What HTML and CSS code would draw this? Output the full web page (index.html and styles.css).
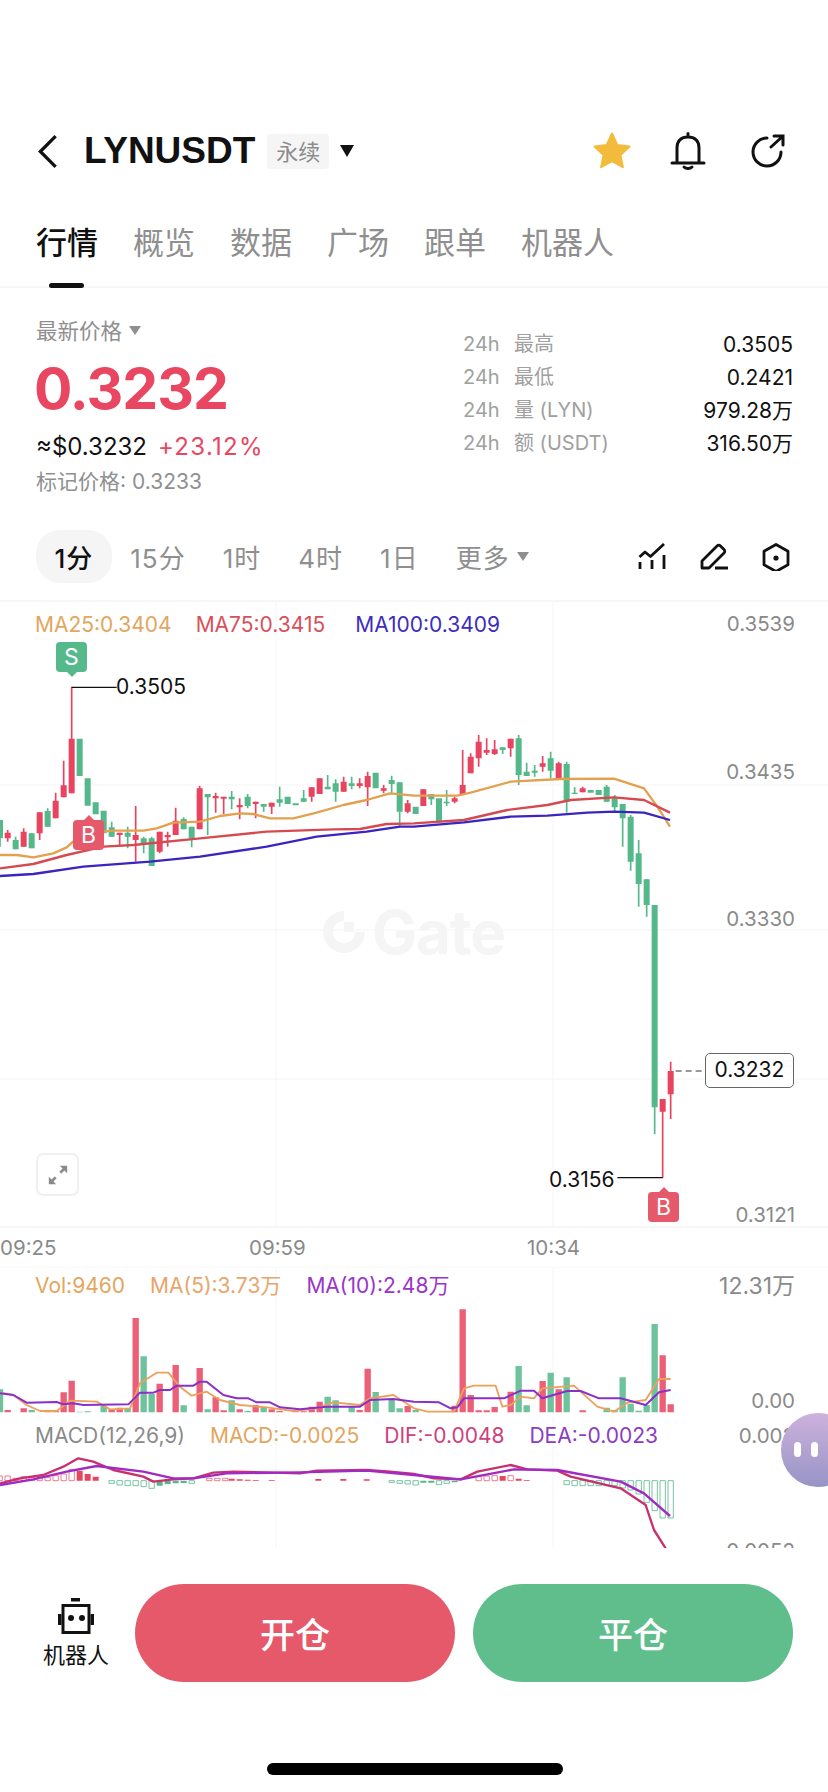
FILE: index.html
```html
<!DOCTYPE html>
<html lang="zh-CN">
<head>
<meta charset="utf-8">
<title>LYNUSDT</title>
<link rel="stylesheet" href="styles.css">
</head>
<body>
<div class="app">
  <header class="topbar">
    <svg class="back" viewBox="0 0 20 32"><path d="M17 2 3 16l14 14"/></svg>
    <h1 class="symbol">LYNUSDT</h1>
    <span class="tag">永续</span>
    <span class="caret"></span>
    <div class="top-icons">
      <svg class="ico-star" viewBox="0 0 40 40"><path d="M20 2.500l5.300 11.400 12.200 1.500-9 8.500 2.400 12.300L20 30.100 9.100 36.200l2.400-12.300-9-8.500 12.200-1.500z"/></svg>
      <svg class="ico-line" viewBox="0 0 36 38"><path d="M2 31h32M7 31V16c0-7 4-11 11-11s11 4 11 11v15M18 1.500V5M14 35c2 2 6 2 8 0"/></svg>
      <svg class="ico-line" viewBox="0 0 36 38"><path d="M31 20a14 14 0 1 1-14-14M21 15 33 4M24 4h9v9"/></svg>
    </div>
  </header>

  <nav class="tabs">
    <a class="tab active">行情</a><a class="tab">概览</a><a class="tab">数据</a><a class="tab">广场</a><a class="tab">跟单</a><a class="tab">机器人</a>
  </nav>

  <section class="quote">
    <div class="quote-left">
      <div class="latest">最新价格<i class="mini-caret"></i></div>
      <div class="price">0.3232</div>
      <div class="fiat">≈$0.3232<span class="change">+23.12%</span></div>
      <div class="mark">标记价格: 0.3233</div>
    </div>
    <dl class="stats">
      <div class="stat"><dt><span class="h24">24h</span>最高</dt><dd>0.3505</dd></div>
      <div class="stat"><dt><span class="h24">24h</span>最低</dt><dd>0.2421</dd></div>
      <div class="stat"><dt><span class="h24">24h</span>量 (LYN)</dt><dd>979.28万</dd></div>
      <div class="stat"><dt><span class="h24">24h</span>额 (USDT)</dt><dd>316.50万</dd></div>
    </dl>
  </section>

  <div class="periods">
    <span class="period on">1分</span><span class="period">15分</span><span class="period">1时</span><span class="period">4时</span><span class="period">1日</span><span class="period">更多<i class="mini-caret"></i></span>
    <div class="tools">
      <svg class="tool" viewBox="0 0 28 28"><path d="M1.500 14l5.500-5 5.500 4.500L26 1M2 19v7M14 17v9M26 12v14"/></svg>
      <svg class="tool" viewBox="0 0 28 28"><path d="M2 25v-7L17 3c1-1 2.500-1 3.500 0l3.500 3.500c1 1 1 2.500 0 3.500L9 25zM15 25h13"/></svg>
      <svg class="tool" viewBox="0 0 28 28"><path d="M14 1.500 26 8.300v13.400l-12 6.800-12-6.800V8.300z"/><circle class="tool-dot" cx="14" cy="15" r="2.600"/></svg>
    </div>
  </div>

  <section class="main-chart">
    <svg class="plot" viewBox="0 270 2484 1884" preserveAspectRatio="none">
      <path class="grid" d="M0 825H2484M0 1260H2484M0 1707H2484M828 270V2154M1659 270V2154"/>
      <path class="wick up" d="M23 960V995M71 955V1010M119 907V990M167 848V925M191 752V862M215 530V850M359 968V1008M407 888V1055M479 965V1030M503 965V1010M527 893V975M599 827V958M647 848V908M671 860V912M719 865V928M767 875V925M815 878V912M935 832V875M959 805V852M1031 800V845M1079 805V835M1103 785V888M1151 825V850M1223 870V910M1270 838V888M1364 860V880M1388 720V855M1412 730V790M1436 675V770M1460 685V735M1484 690V735M1532 686V740M1628 738V785M1676 755V805M1748 830V847M1988 1767V2003M2012 1655V1827"/>
      <path class="body up" d="M23 968V985M71 965V1010M119 907V970M167 872V925M191 826V862M215 686V850M359 968V975M407 975V990M479 965V1025M503 975V982M527 932V975M599 835V958M647 858V865M671 860V866M719 885V892M767 875V882M815 878V890M935 832V860M959 805V852M1031 815V845M1079 820V828M1103 798V832M1151 835V842M1223 880V905M1270 838V888M1364 865V875M1388 825V855M1412 740V790M1436 695V745M1460 720V728M1484 718V732M1532 686V715M1628 760V770M1676 760V805M1748 835V847M1988 1767V1805M2012 1683V1753"/>
      <path class="wick down" d="M0 930V1010M47 980V1018M95 970V1015M143 895V950M335 935V980M383 950V1015M431 980V1030M455 980V1068M551 922V958M575 950V1012M623 852V975M695 843V898M743 852V895M791 882V905M839 830V890M911 840V875M983 795V838M1007 808V875M1055 800V838M1175 797V850M1199 817V950M1294 852V885M1340 840V888M1508 712V732M1556 675V825M1580 758V798M1604 765V800M1652 725V805M1700 755V908M1724 832V852M1820 825V875M1844 855V905M1868 882V1010M1892 915V1082M1916 990V1190M1940 1108V1220M1964 1185V1873"/>
      <path class="body down" d="M0 930V985M47 990V1018M95 970V1015M143 903V950M239 686V798M263 805V887M287 877V913M311 902V970M335 952V980M383 968V980M431 985V1000M455 985V1068M551 927V958M575 950V985M623 852V862M695 860V868M743 860V888M791 882V890M839 868V878M863 860V882M887 880V886M911 865V875M983 830V838M1007 820V845M1055 820V828M1127 788V835M1175 810V822M1199 817V905M1247 890V912M1294 852V868M1317 865V935M1340 875V880M1508 712V720M1556 685V795M1580 785V798M1604 782V788M1652 745V782M1700 762V875M1724 848V852M1772 840V848M1796 840V855M1820 830V875M1844 865V892M1868 882V925M1892 920V1055M1916 1030V1122M1940 1108V1185M1964 1185V1792"/>
      <polyline class="ma ma25" points="0,1035 50,1035 100,1042 160,1030 200,1012 225,990 310,965 340,962 430,962 470,955 520,938 600,935 660,918 720,910 760,912 810,925 880,925 950,908 1030,885 1100,870 1170,850 1242,857 1372,857 1412,848 1532,815 1682,807 1842,806 1932,835 1972,890 2010,950"/>
      <polyline class="ma ma75" points="0,1075 100,1062 200,1035 310,1010 400,1005 600,985 800,965 1000,958 1080,957 1160,942 1242,940 1392,930 1522,900 1642,885 1712,870 1842,862 1932,870 2010,908"/>
      <polyline class="ma ma100" points="0,1098 100,1092 250,1070 450,1055 600,1040 800,1010 950,980 1100,965 1200,950 1242,950 1392,937 1532,920 1642,917 1762,908 1842,905 1932,908 2010,930"/>
      <path class="leader" d="M215 532H350M1852 2003H1988"/>
      <path class="dash" d="M2027 1683H2115"/>
    </svg>

    <div class="legend">
      <span class="c-ma25">MA25:0.3404</span><span class="c-ma75">MA75:0.3415</span><span class="c-ma100">MA100:0.3409</span>
    </div>

    <div class="watermark">
      <svg class="wm-logo" viewBox="0 0 42 42"><path d="M21 0A21 21 0 1 0 42 21H32A11 11 0 1 1 21 10zM21 21h10V11H21z"/></svg>
      <span>Gate</span>
    </div>

    <span class="yl y1">0.3539</span>
    <span class="yl y2">0.3435</span>
    <span class="yl y3">0.3330</span>
    <span class="yl y4">0.3225</span>
    <span class="yl y5">0.3121</span>

    <span class="extreme hi">0.3505</span>
    <span class="extreme lo">0.3156</span>
    <span class="last-price">0.3232</span>

    <span class="badge sell s1">S</span>
    <span class="badge buy b1">B</span>
    <span class="badge buy b2">B</span>

    <button class="expand" aria-label="全屏">
      <svg viewBox="0 0 24 24"><path d="M14 2h8v8l-3-3-3.500 3.500-2-2L17 5zM10 22H2v-8l3 3 3.500-3.500 2 2L7 19z"/></svg>
    </button>
  </section>

  <div class="time-axis"><span>09:25</span><span>09:59</span><span>10:34</span></div>

  <section class="lower">
    <svg class="plot" viewBox="0 144 2484 840" preserveAspectRatio="none">
      <path class="grid" d="M828 144V984M1659 144V984"/>
      <path class="vol up" d="M23 577V570M71 577V565M143 577V573M167 577V573M191 577V517M215 577V482M335 577V570M359 577V563M407 577V294M479 577V491M527 577V435M599 577V444M647 577V532M671 577V571M719 577V568M767 577V555M815 577V568M839 577V573M887 577V574M911 577V574M935 577V560M959 577V545M1079 577V570M1103 577V446M1223 577V558M1364 577V557M1388 577V268M1412 577V525M1436 577V571M1460 577V571M1484 577V561M1532 577V515M1628 577V483M1676 577V508M1748 577V571M1988 577V406M2012 577V553"/>
      <path class="vol down" d="M0 577V508M95 577V570M239 577V575M263 577V574M311 577V558M383 577V566M431 577V409M455 577V522M551 577V556M623 577V568M695 577V541M743 577V573M791 577V560M983 577V530M1007 577V541M1055 577V560M1127 577V516M1175 577V537M1199 577V565M1247 577V570M1556 577V438M1580 577V556M1652 577V458M1700 577V472M1820 577V563M1844 577V570M1868 577V472M1892 577V551M1916 577V572M1940 577V555M1964 577V312"/>
      <polyline class="ma vol-ma5" points="0,518 40,525 80,555 120,573 170,573 210,542 290,545 330,568 390,565 420,490 470,458 505,458 540,500 575,527 620,515 660,540 720,555 800,562 880,573 950,565 1000,547 1080,555 1110,535 1180,525 1242,565 1282,575 1362,575 1392,505 1422,497 1487,497 1507,560 1532,555 1562,530 1602,535 1627,505 1722,497 1792,560 1842,575 1882,548 1937,540 1977,477 2012,477"/>
      <polyline class="ma vol-ma10" points="0,520 40,525 80,548 170,546 190,553 220,550 250,555 385,553 420,518 460,518 480,510 510,510 530,497 580,497 600,485 620,485 670,525 710,535 745,535 770,547 810,547 840,562 900,568 980,560 1080,560 1110,540 1180,537 1242,545 1317,547 1352,565 1372,562 1392,535 1512,535 1562,512 1602,512 1627,535 1702,513 1742,513 1797,535 1862,535 1937,555 1977,517 2012,510"/>
      <path class="hist-solid up" d="M239 782V752M263 782V762M287 782V770M695 782V776M719 782V778M743 782V779M767 782V780M815 782V780M955 782V777M1030 782V777M1100 782V778M1508 782V768M1556 782V776M1580 782V780"/>
      <path class="hist-solid down" d="M479 782V797M503 782V792M527 782V790M551 782V789M1270 782V788M1294 782V788M1364 782V787M1724 782V785M1772 782V785"/>
      <path class="hist-box up-line" d="M-9 782h16v-14h-16zM15 782h16v-14h-16zM39 782h16v-7h-16zM63 782h16v-12h-16zM87 782h16v-10h-16zM111 782h16v-10h-16zM135 782h16v-10h-16zM159 782h16v-15h-16zM183 782h16v-20h-16zM207 782h16v-34h-16zM620 782h16v-7h-16zM644 782h16v-7h-16zM668 782h16v-7h-16zM1428 782h16v-12h-16zM1452 782h16v-14h-16zM1476 782h16v-15h-16zM1524 782h16v-15h-16z"/>
      <path class="hist-box down-line" d="M327 782h16v8h-16zM351 782h16v13h-16zM375 782h16v15h-16zM399 782h16v15h-16zM423 782h16v18h-16zM447 782h16v23h-16zM567 782h16v8h-16zM1167 782h16v5h-16zM1191 782h16v8h-16zM1215 782h16v10h-16zM1239 782h16v13h-16zM1309 782h16v12h-16zM1332 782h16v8h-16zM1692 782h16v12h-16zM1716 782h16v15h-16zM1740 782h16v15h-16zM1764 782h16v15h-16zM1788 782h16v15h-16zM1812 782h16v15h-16zM1836 782h16v15h-16zM1860 782h16v22h-16zM1884 782h16v28h-16zM1908 782h16v40h-16zM1932 782h16v65h-16zM1956 782h16v90h-16zM1980 782h16v112h-16zM2004 782h16v112h-16z"/>
      <polyline class="ma dif" points="0,790 60,775 130,765 190,740 235,715 280,725 340,750 430,770 460,785 520,778 580,775 640,758 700,755 900,760 950,752 1100,750 1170,755 1242,762 1302,775 1382,778 1432,755 1532,735 1582,748 1672,752 1712,770 1862,805 1937,855 1962,930 1997,985"/>
      <polyline class="ma dea" points="0,795 100,778 200,755 290,738 430,755 520,775 580,775 680,760 900,757 1100,752 1242,765 1382,778 1542,748 1672,750 1862,785 1932,820 2010,888"/>
    </svg>

    <div class="row vol-row">
      <div class="legend-inline"><span class="c-ma25">Vol:9460</span><span class="c-ma5">MA(5):3.73万</span><span class="c-ma10">MA(10):2.48万</span></div>
      <span class="axis-val axis-top">12.31万</span>
    </div>
    <div class="row zero-row"><span></span><span class="axis-val">0.00</span></div>
    <div class="row macd-row">
      <div class="legend-inline"><span class="c-gray">MACD(12,26,9)</span><span class="c-ma25">MACD:-0.0025</span><span class="c-dif">DIF:-0.0048</span><span class="c-dea">DEA:-0.0023</span></div>
      <span class="axis-val">0.002</span>
    </div>
    <div class="row min-row"><span></span><span class="axis-val">0.0052</span></div>
  </section>

  <footer class="actions">
    <div class="bot">
      <svg class="bot-ico" viewBox="0 0 38 36"><path class="bot-line" d="M6 7.500h26v27H6z"/><path class="bot-fill" d="M14 0h9v3.500h-9zM1 16h3.500v11H1zM33.500 16H37v11h-3.500z"/><circle class="bot-fill" cx="14" cy="20" r="3"/><circle class="bot-fill" cx="25" cy="20" r="3"/></svg>
      <span class="bot-label">机器人</span>
    </div>
    <button class="cta open">开仓</button>
    <button class="cta close">平仓</button>
  </footer>

  <div class="home-bar"></div>

  <div class="assistant"><i></i><i></i></div>
</div>
</body>
</html>
```
FILE: styles.css
```css
* { box-sizing: border-box; margin: 0; padding: 0; }
html, body { background: #fff; }
body { font-family: Inter, "Noto Sans CJK SC", sans-serif; color: #111; }
.app { position: relative; width: 828px; height: 1792px; overflow: hidden; background: #fff; }

/* top bar */
.topbar { display: flex; align-items: center; height: 52px; margin-top: 125px; padding-left: 37px; }
.back { width: 22px; height: 35px; fill: none; stroke: #111; stroke-width: 3; }
.symbol { margin-left: 25px; font: 700 37px/52px "Liberation Sans", sans-serif; color: #111; }
.tag { margin-left: 12px; width: 62px; height: 35px; background: #f5f5f5; border-radius: 4px; text-align: center; font: 400 22px/33px "Noto Sans CJK SC", sans-serif; color: #8c8c8c; }
.caret { margin-left: 11px; width: 0; height: 0; border-left: 7px solid transparent; border-right: 7px solid transparent; border-top: 12px solid #111; }
.top-icons { display: flex; align-items: center; margin-left: auto; padding-right: 42px; gap: 44px; }
.ico-star { width: 40px; height: 40px; margin-right: -6px; fill: #f3bb3c; stroke: #f3bb3c; stroke-width: 2; stroke-linejoin: round; }
.ico-line { width: 36px; height: 38px; fill: none; stroke: #111; stroke-width: 3; stroke-linecap: round; }

/* tabs */
.tabs { display: flex; gap: 35px; height: 111px; padding: 44px 0 0 36px; border-bottom: 2px solid #f6f6f6; }
.tab { position: relative; font: 400 31px/40px "Noto Sans CJK SC", sans-serif; color: #8f8f8f; }
.tab.active { color: #111; font-weight: 500; }
.tab.active::after { content: ""; position: absolute; left: 13px; top: 62px; width: 35px; height: 5px; border-radius: 3px; background: #111; }

/* quote */
.quote { display: flex; justify-content: space-between; padding: 26px 35px 0 36px; }
.latest { display: flex; align-items: center; font: 400 21.500px/32px "Noto Sans CJK SC", sans-serif; color: #8f8f8f; }
.mini-caret { display: inline-block; margin-left: 7px; width: 0; height: 0; border-left: 6px solid transparent; border-right: 6px solid transparent; border-top: 9px solid #8f8f8f; }
.price { margin: 8px 0 0 -2px; font: 700 57px/70px Inter, sans-serif; letter-spacing: -1px; color: #e84661; }
.fiat { margin-top: 6px; font-size: 24px; line-height: 34px; color: #111; }
.change { margin-left: 11px; letter-spacing: 1.300px; color: #e84661; }
.mark { margin-top: 3px; font: 400 21px/30px Inter, "Noto Sans CJK SC", sans-serif; color: #8f8f8f; }
.stats { width: 330px; margin-top: 14px; }
.stat { display: flex; justify-content: space-between; height: 33px; font-size: 20px; line-height: 33px; }
.stat dt { color: #a0a0a0; }
.stat dd { font-size: 21px; color: #111; }
.h24 { display: inline-block; width: 51px; }

/* periods */
.periods { display: flex; align-items: center; height: 53px; margin-top: 33px; padding-left: 36px; padding-right: 38px; }
.period { display: flex; align-items: center; height: 53px; padding: 0 18.500px; border-radius: 24px; font-size: 26px; letter-spacing: 1px; color: #8f8f8f; }
.period.on { background: #f5f5f5; color: #111; font-weight: 500; }
.tools { display: flex; gap: 34px; margin-left: auto; }
.tool { width: 28px; height: 28px; fill: none; stroke: #111; stroke-width: 2.800; stroke-linejoin: round; }
.tool-dot { fill: #111; stroke: none; }

/* main chart */
.main-chart { position: relative; height: 628px; margin-top: 17px; border-top: 2px solid #f6f6f6; border-bottom: 2px solid #f6f6f6; }
.plot { position: absolute; left: 0; top: -2px; width: 828px; height: 628px; fill: none; }
.lower .plot { top: 0; height: 280px; }
.grid { stroke: #f5f5f5; stroke-width: 3; }
.wick { stroke-width: 5; }
.body { stroke-width: 18; }
.up { stroke: #e8435f; }
.down { stroke: #55b88b; }
.ma { fill: none; stroke-width: 7; stroke-linejoin: round; }
.ma25 { stroke: #e3a14f; }
.ma75 { stroke: #d64a4f; }
.ma100 { stroke: #3a25c0; }
.leader { stroke: #111; stroke-width: 4; }
.dash { stroke: #333; stroke-width: 3; stroke-dasharray: 18 12; }
.legend { position: relative; display: flex; gap: 24px; padding: 9px 0 0 35px; font-size: 21px; line-height: 28px; }
.c-ma25 { color: #e2a65e; }
.c-ma75 { color: #d9505a; }
.c-ma100 { margin-left: 6px; color: #3d2dbd; }
.c-ma5 { color: #e8a56c; }
.c-ma10 { color: #9a35c9; }
.c-gray { color: #8a8a8a; }
.c-dif { color: #cf3f7d; }
.c-dea { color: #8b3cc4; }

.watermark { position: absolute; left: 323px; top: 304px; display: flex; align-items: center; gap: 7px; height: 52px; font: 700 60px/52px Inter, sans-serif; letter-spacing: -1px; color: #f5f5f5; }
.wm-logo { width: 42px; height: 42px; fill: #f5f5f5; }

.yl { position: absolute; right: 33px; font-size: 20.500px; line-height: 28px; color: #8a8a8a; }
.y1 { top: 8px; }
.y2 { top: 156px; }
.y3 { top: 303px; }
.y4 { top: 452px; color: #d8d8d8; }
.y5 { top: 599px; }
.extreme { position: absolute; font-size: 21px; line-height: 28px; color: #111; }
.hi { left: 116px; top: 71px; }
.lo { left: 549px; top: 564px; }
.last-price { position: absolute; left: 705px; top: 451px; width: 89px; height: 35px; border: 1.500px solid #666; border-radius: 5px; background: rgba(255, 255, 255, .88); text-align: center; font-size: 21px; line-height: 32px; color: #111; }

.badge { position: absolute; width: 31px; height: 30px; border-radius: 4px; text-align: center; font-size: 23px; line-height: 30px; color: #fff; }
.sell { background: #56b98c; }
.buy { background: #e5596a; }
.badge::after { content: ""; position: absolute; left: 11px; width: 0; height: 0; border-left: 5px solid transparent; border-right: 5px solid transparent; }
.sell::after { top: 30px; border-top: 5px solid #56b98c; }
.buy::after { top: -5px; border-bottom: 5px solid #e5596a; }
.s1 { left: 56px; top: 40px; }
.b1 { left: 73px; top: 218px; }
.b2 { left: 648px; top: 590px; }

.expand { position: absolute; left: 36px; top: 551px; display: flex; align-items: center; justify-content: center; width: 43px; height: 43px; background: #fff; border: 2px solid #f0f0f0; border-radius: 7px; }
.expand svg { width: 22px; height: 22px; fill: #8a8a8a; }

/* time axis */
.time-axis { display: grid; grid-template-columns: 249px 278px auto; align-items: center; height: 40px; font-size: 20.500px; color: #8a8a8a; border-bottom: 1px solid #f8f8f8; }

/* lower panels */
.lower { position: relative; height: 280px; overflow: hidden; padding-right: 33px; }
.vol { stroke-width: 19; opacity: .85; }
.vol-ma5 { stroke: #eda05c; stroke-width: 5.500; }
.vol-ma10 { stroke: #8a2fc7; stroke-width: 6; }
.hist-solid { stroke-width: 18; }
.hist-box { fill: #fff; stroke-width: 2.500; }
.up-line { stroke: #e8667c; }
.down-line { stroke: #5cb890; }
.dif { stroke: #c9306e; }
.dea { stroke: #a02ac4; }
.row { position: relative; display: flex; justify-content: space-between; height: 28px; padding-left: 35px; font-size: 21px; line-height: 28px; }
.legend-inline { display: flex; gap: 25px; }
.axis-val { color: #8a8a8a; font-size: 20.500px; }
.axis-top { font-size: 23px; }
.vol-row { margin-top: 4px; }
.zero-row { margin-top: 87px; }
.macd-row { margin-top: 7px; }
.min-row { margin-top: 87px; }

/* actions */
.actions { display: flex; align-items: center; height: 98px; margin-top: 36px; padding-left: 36px; }
.bot { display: flex; flex-direction: column; align-items: center; width: 80px; margin-right: 19px; }
.bot-ico { width: 38px; height: 36px; }
.bot-line { fill: none; stroke: #111; stroke-width: 3; }
.bot-fill { fill: #111; }
.bot-label { margin-top: 4px; font: 400 22px/30px "Noto Sans CJK SC", sans-serif; color: #111; }
.cta { width: 320px; height: 98px; border: 0; border-radius: 49px; font: 500 35px/98px "Noto Sans CJK SC", sans-serif; color: #fff; }
.open { background: #e5596a; }
.close { margin-left: 18px; background: #5fbe8c; }

.home-bar { width: 296px; height: 12px; margin: 81px 0 0 267px; border-radius: 6px; background: #000; }

.assistant { position: absolute; left: 781px; top: 1413px; display: flex; justify-content: flex-start; gap: 10px; width: 74px; height: 74px; padding: 29px 0 0 13px; border-radius: 50%; background: linear-gradient(#cdb2dc, #9694c6); }
.assistant i { width: 7px; height: 15px; border-radius: 4px; background: #fff; }
```
